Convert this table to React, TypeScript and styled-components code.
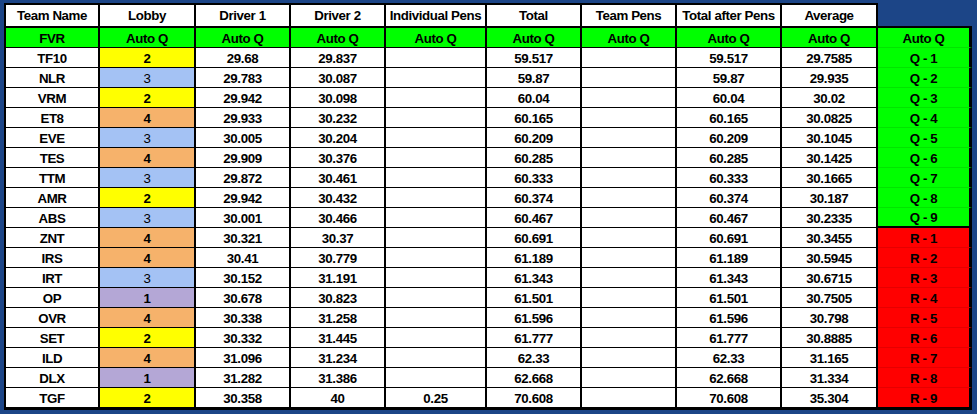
import React from "react";
import styled, { createGlobalStyle } from "styled-components";

const Global = createGlobalStyle`
  html, body { margin: 0; padding: 0; background: #1c4587; }
  body { width: 977px; height: 414px; overflow: hidden; }
  #root { font-family: "Liberation Sans", Arial, sans-serif; }
`;

const COLS = [96, 96, 95, 95, 101, 95, 95, 105, 96, 94];

const Page = styled.div`
  padding: 3px 0 0 4px;
`;

const Grid = styled.div`
  display: grid;
  grid-template-columns: ${COLS.map((c) => c + "px").join(" ")};
  grid-template-rows: 25px 20px repeat(17, 20px) 22px;
`;

type Kind = "head" | "auto" | "data" | "last" | "corner" | "qhead" | "q" | "qlast" | "qsplit";

const Cell = styled.div<{ $bg?: string; $kind: Kind; $first?: boolean; $light?: boolean }>`
  box-sizing: border-box;
  display: flex;
  align-items: center;
  justify-content: center;
  font-size: 13.3px;
  letter-spacing: -0.4px;
  font-weight: ${(p) => (p.$light ? 400 : 700)};
  color: #000;
  white-space: nowrap;
  overflow: hidden;
  background: ${(p) => p.$bg || "#ffffff"};
  border-left: ${(p) => (p.$first ? "2px solid #000" : "0")};
  border-right: 2px solid #000;
  border-bottom: 1px solid #000;
  padding-top: 1px;
  ${(p) =>
    p.$kind === "head" &&
    `border-top: 2px solid #000; border-bottom: 2px solid #000; padding-top: 0;`}
  ${(p) => p.$kind === "last" && `border-bottom: 3px solid #000;`}
  ${(p) =>
    p.$kind === "corner" &&
    `background: transparent; border-right: 0; border-bottom: 2px solid #000;`}
  ${(p) => p.$kind === "qhead" && `border-right: 3px solid #000; border-bottom: 1px solid rgba(0,0,0,0.1);`}
  ${(p) => p.$kind === "q" && `border-right: 3px solid #000; border-bottom: 1px solid rgba(0,0,0,0.1);`}
  ${(p) => p.$kind === "qsplit" && `border-right: 3px solid #000; border-bottom: 2px solid #000;`}
  ${(p) => p.$kind === "qlast" && `border-right: 3px solid #000; border-bottom: 3px solid #000;`}
`;

const HEAD = [
  "Team Name",
  "Lobby",
  "Driver 1",
  "Driver 2",
  "Individual Pens",
  "Total",
  "Team Pens",
  "Total after Pens",
  "Average",
];

const LOBBY: Record<string, string> = {
  "1": "#b4a7d6",
  "2": "#ffff00",
  "3": "#a4c2f4",
  "4": "#f6b26b",
};

const ROWS: string[][] = [
  ["TF10", "2", "29.68", "29.837", "", "59.517", "", "59.517", "29.7585", "Q - 1"],
  ["NLR", "3", "29.783", "30.087", "", "59.87", "", "59.87", "29.935", "Q - 2"],
  ["VRM", "2", "29.942", "30.098", "", "60.04", "", "60.04", "30.02", "Q - 3"],
  ["ET8", "4", "29.933", "30.232", "", "60.165", "", "60.165", "30.0825", "Q - 4"],
  ["EVE", "3", "30.005", "30.204", "", "60.209", "", "60.209", "30.1045", "Q - 5"],
  ["TES", "4", "29.909", "30.376", "", "60.285", "", "60.285", "30.1425", "Q - 6"],
  ["TTM", "3", "29.872", "30.461", "", "60.333", "", "60.333", "30.1665", "Q - 7"],
  ["AMR", "2", "29.942", "30.432", "", "60.374", "", "60.374", "30.187", "Q - 8"],
  ["ABS", "3", "30.001", "30.466", "", "60.467", "", "60.467", "30.2335", "Q - 9"],
  ["ZNT", "4", "30.321", "30.37", "", "60.691", "", "60.691", "30.3455", "R - 1"],
  ["IRS", "4", "30.41", "30.779", "", "61.189", "", "61.189", "30.5945", "R - 2"],
  ["IRT", "3", "30.152", "31.191", "", "61.343", "", "61.343", "30.6715", "R - 3"],
  ["OP", "1", "30.678", "30.823", "", "61.501", "", "61.501", "30.7505", "R - 4"],
  ["OVR", "4", "30.338", "31.258", "", "61.596", "", "61.596", "30.798", "R - 5"],
  ["SET", "2", "30.332", "31.445", "", "61.777", "", "61.777", "30.8885", "R - 6"],
  ["ILD", "4", "31.096", "31.234", "", "62.33", "", "62.33", "31.165", "R - 7"],
  ["DLX", "1", "31.282", "31.386", "", "62.668", "", "62.668", "31.334", "R - 8"],
  ["TGF", "2", "30.358", "40", "0.25", "70.608", "", "70.608", "35.304", "R - 9"],
];

export default function App() {
  const last = ROWS.length - 1;
  return (
    <>
      <Global />
      <Page>
        <Grid>
          {HEAD.map((h, i) => (
            <Cell key={"h" + i} $kind="head" $first={i === 0}>
              {h}
            </Cell>
          ))}
          <Cell $kind="corner" />
          <Cell $kind="data" $first $bg="#00ff00">
            FVR
          </Cell>
          {HEAD.slice(1).map((_, i) => (
            <Cell key={"a" + i} $kind="data" $bg="#00ff00">
              Auto Q
            </Cell>
          ))}
          <Cell $kind="qhead" $bg="#00ff00">
            Auto Q
          </Cell>
          {ROWS.map((r, ri) =>
            r.map((v, ci) => {
              if (ci === 9) {
                const kind: Kind = ri === last ? "qlast" : ri === 8 ? "qsplit" : "q";
                return (
                  <Cell key={ri + "-" + ci} $kind={kind} $bg={ri < 9 ? "#00ff00" : "#ff0000"}>
                    {v}
                  </Cell>
                );
              }
              return (
                <Cell
                  key={ri + "-" + ci}
                  $kind={ri === last ? "last" : "data"}
                  $first={ci === 0}
                  $bg={ci === 1 ? LOBBY[v] : undefined}
                  $light={ci === 1 && v === "3"}
                >
                  {v}
                </Cell>
              );
            })
          )}
        </Grid>
      </Page>
    </>
  );
}
